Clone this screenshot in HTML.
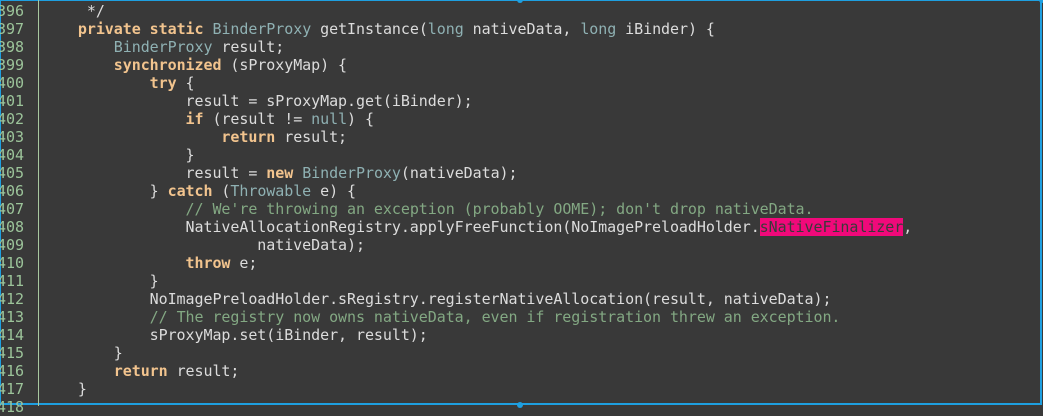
<!DOCTYPE html>
<html><head><meta charset="utf-8"><style>
html,body{margin:0;padding:0;}
body{width:1043px;height:406px;overflow:hidden;background:#393939;position:relative;font-family:"DejaVu Sans Mono","Liberation Mono",monospace;font-size:15px;}
.frame{position:absolute;left:0;top:0;width:1039px;height:402px;border:2px solid #1e9fe0;border-top-width:1px;border-left-width:1px;}
.gut{position:absolute;left:38px;top:0;width:1px;height:406px;background:#a8c8a0;}
.nums{position:absolute;left:-3px;top:2px;color:#9cc49a;line-height:18px;white-space:pre;}
.code{position:absolute;left:42px;top:2px;color:#dcdcdc;line-height:18px;white-space:pre;letter-spacing:-0.06px;}
.k{color:#f2c48e;font-weight:bold;}
.t{color:#8fb1b3;}
.c{color:#83a883;}
.h{background:#f0097a;color:#3a3a3a;}
.dot{position:absolute;width:6px;height:6px;border-radius:3px;background:#1e9fe0;}
</style></head><body>
<div class="frame"></div>
<div class="gut"></div>
<div class="nums">396
397
398
399
400
401
402
403
404
405
406
407
408
409
410
411
412
413
414
415
416
417
418</div>
<div class="code">     */
    <span class="k">private</span> <span class="k">static</span> <span class="t">BinderProxy</span> getInstance(<span class="t">long</span> nativeData, <span class="t">long</span> iBinder) {
        <span class="t">BinderProxy</span> result;
        <span class="k">synchronized</span> (sProxyMap) {
            <span class="k">try</span> {
                result = sProxyMap.get(iBinder);
                <span class="k">if</span> (result != <span class="t">null</span>) {
                    <span class="k">return</span> result;
                }
                result = <span class="k">new</span> <span class="t">BinderProxy</span>(nativeData);
            } <span class="k">catch</span> (<span class="t">Throwable</span> e) {
                <span class="c">// We're throwing an exception (probably OOME); don't drop nativeData.</span>
                NativeAllocationRegistry.applyFreeFunction(NoImagePreloadHolder.<span class="h">sNativeFinalizer</span>,
                        nativeData);
                <span class="k">throw</span> e;
            }
            NoImagePreloadHolder.sRegistry.registerNativeAllocation(result, nativeData);
            <span class="c">// The registry now owns nativeData, even if registration threw an exception.</span>
            sProxyMap.set(iBinder, result);
        }
        <span class="k">return</span> result;
    }</div>
<div class="dot" style="left:517px;top:-3px"></div>
<div class="dot" style="left:517px;top:402px"></div>
<div class="dot" style="left:1039px;top:-3px"></div>
</body></html>
